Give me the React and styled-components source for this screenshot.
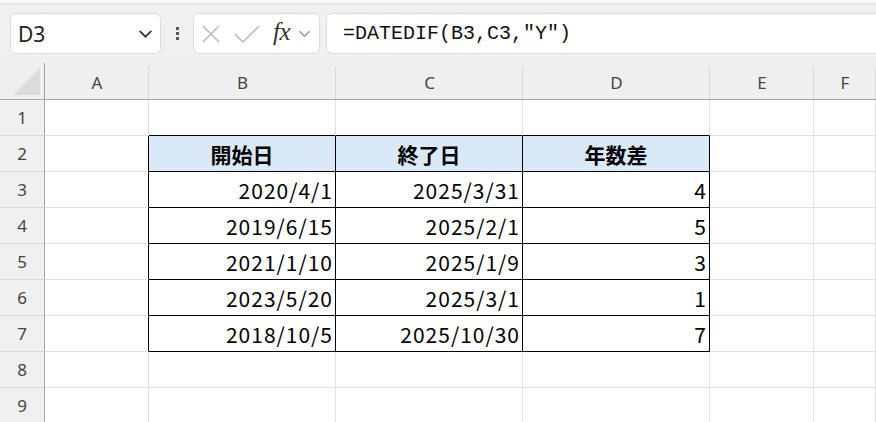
import React from "react";
import styled, { createGlobalStyle } from "styled-components";

const Global = createGlobalStyle`
  html, body { margin: 0; padding: 0; background: #f0f0f0; overflow: hidden; }
  body { font-family: "Segoe UI", "Noto Sans", "Open Sans", sans-serif; }
`;

const Page = styled.div`
  width: 876px;
  height: 422px;
  display: flex;
  flex-direction: column;
  background: #f0f0f0;
  overflow: hidden;
`;

const Ribbon = styled.div`
  flex-shrink: 0;
  height: 6px;
  background: linear-gradient(#f6f6f6 0, #f3f3f3 3px, #dedede 4px, #ececec 5px, #f0f0f0 6px);
`;

const Bar = styled.div`
  flex-shrink: 0;
  height: 57px;
  display: flex;
  align-items: flex-start;
  padding: 7px 0 0 10px;
  box-sizing: border-box;
`;

const Box = styled.div`
  height: 41px;
  box-sizing: border-box;
  background: #fff;
  border: 1px solid #dcdcdc;
  border-radius: 6px;
  display: flex;
  align-items: center;
`;

const NameBox = styled(Box)`
  width: 151px;
  padding: 0 7px 0 7px;
  justify-content: space-between;
  font-size: 21px;
  color: #222;
`;

const Dots = styled.div`
  width: 32px;
  height: 41px;
  display: flex;
  flex-direction: column;
  align-items: center;
  justify-content: center;
  gap: 2px;
  span {
    width: 3px;
    height: 3px;
    background: #555;
  }
`;

const FuncBox = styled(Box)`
  width: 127px;
  padding: 0 4px 0 7px;
`;

const Gap = styled.span`
  width: ${(p) => p.$w}px;
  flex-shrink: 0;
`;

const Fx = styled.span`
  font-family: "Liberation Serif", "DejaVu Serif", serif;
  font-style: italic;
  font-size: 25px;
  color: #333;
  margin: 0 8px 4px 13px;
  letter-spacing: -0.5px;
`;

const FormulaBox = styled(Box)`
  flex: 1;
  margin-left: 6px;
  margin-right: -10px;
  padding-left: 16px;
  font-family: "Liberation Mono", "DejaVu Sans Mono", monospace;
  font-size: 20px;
  color: #111;
`;

const Grid = styled.div`
  flex-shrink: 0;
  display: grid;
  grid-template-columns: 45px 104px 187px 187px 187px 104px 1fr;
  grid-template-rows: 37px repeat(9, 36px);
`;

const Corner = styled.div`
  position: relative;
  background: #efefef;
  border-right: 1px solid #a6a6a6;
  border-bottom: 1px solid #a6a6a6;
  box-sizing: border-box;
  &::after {
    content: "";
    position: absolute;
    right: 4px;
    bottom: 4px;
    width: 0;
    height: 0;
    border-style: solid;
    border-width: 0 0 27px 27px;
    border-color: transparent transparent #dcdcdc transparent;
  }
`;

const ColHead = styled.div`
  background: #efefef;
  box-sizing: border-box;
  border-bottom: 1px solid #a6a6a6;
  display: flex;
  align-items: center;
  justify-content: center;
  font-size: 17px;
  color: #444;
  padding-top: 2px;
  position: relative;
  &::after {
    content: "";
    position: absolute;
    right: 0;
    top: 4px;
    bottom: 0;
    width: 1px;
    background: #dadada;
  }
`;

const RowHead = styled.div`
  background: #f0f0f0;
  box-sizing: border-box;
  border-right: 1px solid #a6a6a6;
  border-bottom: 1px solid #dcdcdc;
  display: flex;
  align-items: center;
  justify-content: center;
  font-size: 17px;
  color: #444;
`;

const Cell = styled.div`
  background: ${(p) => (p.$head ? "#dae9f8" : "#fff")};
  box-sizing: border-box;
  border-right: 1px solid ${(p) => (p.$br ? "#000" : "#e1e1e1")};
  border-bottom: 1px solid ${(p) => (p.$bb ? "#000" : "#e1e1e1")};
  display: flex;
  align-items: center;
  justify-content: ${(p) => (p.$head ? "center" : "flex-end")};
  padding: ${(p) => (p.$head ? "1px 0 0 0" : "1px 2px 0 0")};
  font-family: "Noto Sans CJK JP", "Noto Sans", sans-serif;
  font-size: 21px;
  font-weight: ${(p) => (p.$head ? 700 : 400)};
  letter-spacing: ${(p) => (p.$head ? "0" : "1px")};
  color: #000;
  white-space: nowrap;
`;

const Chevron = ({ size = 14, color = "#333" }) => (
  <svg width={size} height={size} viewBox="0 0 14 14">
    <polyline points="1.5,4.5 7,10 12.5,4.5" fill="none" stroke={color} strokeWidth="1.6" />
  </svg>
);

const XIcon = () => (
  <svg width="20" height="20" viewBox="0 0 20 20">
    <path d="M2 2 L18 18 M18 2 L2 18" stroke="#b4b4b4" strokeWidth="1.4" fill="none" />
  </svg>
);

const CheckIcon = () => (
  <svg width="26" height="20" viewBox="0 0 26 20">
    <polyline points="1,10 9,18 25,2" fill="none" stroke="#b4b4b4" strokeWidth="1.4" />
  </svg>
);

const cols = ["A", "B", "C", "D", "E", "F"];
const data = [
  ["開始日", "終了日", "年数差"],
  ["2020/4/1", "2025/3/31", "4"],
  ["2019/6/15", "2025/2/1", "5"],
  ["2021/1/10", "2025/1/9", "3"],
  ["2023/5/20", "2025/3/1", "1"],
  ["2018/10/5", "2025/10/30", "7"],
];

export default function App() {
  const rows = [];
  for (let r = 1; r <= 9; r++) {
    rows.push(<RowHead key={`h${r}`}>{r}</RowHead>);
    for (let c = 0; c < 6; c++) {
      const inTable = r >= 2 && r <= 7 && c >= 1 && c <= 3;
      const val = inTable ? data[r - 2][c - 1] : "";
      const br = inTable || (c === 0 && r >= 2 && r <= 7);
      const bb = inTable || (r === 1 && c >= 1 && c <= 3);
      rows.push(
        <Cell key={`${r}-${c}`} $head={inTable && r === 2} $br={br} $bb={bb}>
          {val}
        </Cell>
      );
    }
  }
  return (
    <Page>
      <Global />
      <Ribbon />
      <Bar>
        <NameBox>
          <span>D3</span>
          <Chevron size={15} color="#333" />
        </NameBox>
        <Dots>
          <span />
          <span />
          <span />
        </Dots>
        <FuncBox>
          <XIcon />
          <Gap $w={13} />
          <CheckIcon />
          <Fx>fx</Fx>
          <Chevron size={13} color="#999" />
        </FuncBox>
        <FormulaBox>=DATEDIF(B3,C3,"Y")</FormulaBox>
      </Bar>
      <Grid>
        <Corner />
        {cols.map((c) => (
          <ColHead key={c}>{c}</ColHead>
        ))}
        {rows}
      </Grid>
    </Page>
  );
}
